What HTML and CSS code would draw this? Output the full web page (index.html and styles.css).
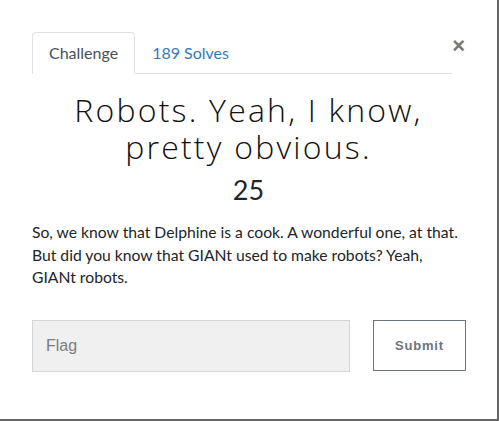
FILE: index.html
```html
<!DOCTYPE html>
<html>
<head>
<meta charset="utf-8">
<link rel="stylesheet" href="styles.css">
</head>
<body>
<div class="modal">
  <div class="header">
    <ul class="tabs">
      <li class="tab active">Challenge</li>
      <li class="tab link">189 Solves</li>
    </ul>
    <span class="close">&times;</span>
  </div>
  <h2 class="title">Robots. Yeah, I know, pretty obvious.</h2>
  <div class="value">25</div>
  <p class="desc">So, we know that Delphine is a cook. A wonderful one, at that. But did you know that GIANt used to make robots? Yeah, GIANt robots.</p>
  <div class="form">
    <div class="flag">Flag</div>
    <div class="submit">Submit</div>
  </div>
</div>
</body>
</html>
```
FILE: styles.css
```css
html, body {
  margin: 0;
  padding: 0;
  background: #fff;
}
.modal {
  box-sizing: border-box;
  width: 499px;
  height: 421px;
  padding: 32px 32px 0 32px;
  border-right: 2px solid #666;
  border-bottom: 2px solid #666;
  font-family: Lato, "Noto Sans", sans-serif;
  color: #212529;
  background: #fff;
}
.header {
  display: flex;
  align-items: flex-start;
}
.tabs {
  flex: 1;
  display: flex;
  margin: 0;
  padding: 0;
  list-style: none;
  border-bottom: 1px solid #dee2e6;
}
.tab {
  font-size: 16px;
  line-height: 22px;
  padding: 9px 16px 9px 16px;
  border: 1px solid transparent;
  border-top-left-radius: 4px;
  border-top-right-radius: 4px;
  margin-bottom: -1px;
}
.tab.active {
  color: #495057;
  border-color: #dee2e6 #dee2e6 #fff;
  background: #fff;
}
.tab.link {
  color: #337ab7;
}
.close {
  width: 13px;
  margin-top: 4px;
  text-align: right;
  font-family: "Liberation Sans", sans-serif;
  font-weight: bold;
  font-size: 22px;
  line-height: 20px;
  color: #777;
}
.title {
  margin: 17px 0 0;
  text-align: center;
  font-family: "Open Sans", sans-serif;
  font-weight: 300;
  font-size: 32px;
  line-height: 37px;
  color: #111;
  letter-spacing: 2.2px;
}
.value {
  margin-top: 9px;
  text-align: center;
  font-size: 27px;
  line-height: 32px;
  color: #212529;
}
.desc {
  margin: 15px 0 0;
  font-size: 15.7px;
  line-height: 22.5px;
}
.form {
  display: grid;
  grid-template-columns: 318px 93px;
  column-gap: 23px;
  margin-top: 31px;
}
.flag {
  box-sizing: border-box;
  height: 52px;
  padding: 0 13px;
  display: flex;
  align-items: center;
  background: #f0f0f0;
  border: 1px solid #d3d6d9;
  font-family: "Liberation Sans", sans-serif;
  font-size: 16px;
  color: #7d7d7d;
}
.submit {
  box-sizing: border-box;
  height: 51px;
  display: flex;
  align-items: center;
  justify-content: center;
  border: 1px solid #6c757d;
  font-family: "Liberation Sans", sans-serif;
  font-weight: bold;
  font-size: 13px;
  letter-spacing: 0.8px;
  color: #6c757d;
}
```
